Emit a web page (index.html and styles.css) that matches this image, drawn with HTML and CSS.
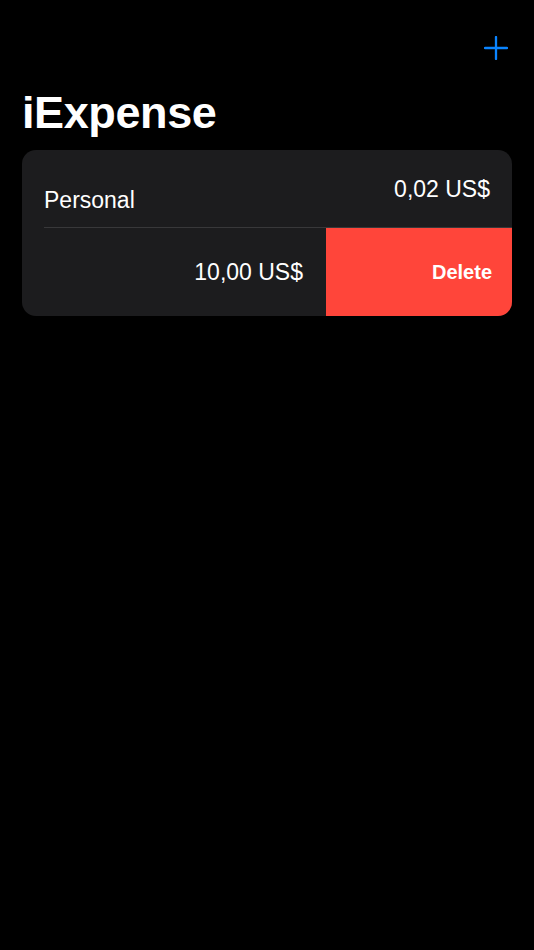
FILE: index.html
```html
<!DOCTYPE html>
<html lang="en">
<head>
    <meta charset="UTF-8">
    <meta name="viewport" content="width=device-width, initial-scale=1.0">
    <title>iExpense</title>
    <link rel="stylesheet" href="styles.css">
</head>
<body>

    <div class="wrapper">
        <header class="nav">
            <a href="" class="add-btn" aria-label="Add">
                <svg width="24" height="24" viewBox="0 0 24 24">
                    <path d="M12 1 V23 M1 12 H23" stroke="#0a84ff" stroke-width="2.3" stroke-linecap="round" fill="none"/>
                </svg>
            </a>
        </header>
        <main>
            <h1 class="title">iExpense</h1>
            <ul class="list">
                <li class="row row-first">
                    <span class="name">Personal</span>
                    <span class="amount">0,02 US$</span>
                </li>
                <li class="row row-swiped">
                    <div class="row-content">
                        <span class="amount">10,00 US$</span>
                    </div>
                    <a href="" class="delete-btn">Delete</a>
                </li>
            </ul>
        </main>
    </div>

</body>
</html>
```

FILE: styles.css
```css
*{box-sizing: border-box;}
ul{list-style: none;margin:0;padding:0;}
a{text-decoration: none;color:inherit;}
body{
    margin:0;
    background:#000;
    color:#fff;
    font-family: "Liberation Sans", Arial, sans-serif;
}

.wrapper{
    min-height:100vh;
}

/* top bar */
.nav{
    display:flex;
    justify-content: flex-end;
    padding: 36px 26px 0 0;
}
.nav>.add-btn{
    display:block;
    width:24px;
    height:24px;
}
.nav>.add-btn>svg{
    display:block;
}

.title{
    margin: 27px 0 11px 0;
    padding-left:22px;
    font-size:45px;
    line-height:52px;
    font-weight:700;
    letter-spacing:-0.4px;
}

/* list card */
.list{
    margin: 0 22px;
    background:#1c1c1e;
    border-radius:14px;
    overflow:hidden;
}
.list>.row{
    font-size:23px;
    line-height:28px;
}
.list>.row-first{
    height:78px;
    display:flex;
    justify-content: space-between;
    align-items: flex-start;
    padding: 25px 22px 0 22px;
    position:relative;
}
.list>.row-first>.name{
    margin-top:11px;
}
.list>.row-first::after{
    content:"";
    position:absolute;
    left:22px;
    right:0;
    bottom:0;
    height:1px;
    background:#38383a;
}

.list>.row-swiped{
    height:88px;
    display:flex;
}
.list>.row-swiped>.row-content{
    flex:1;
    display:flex;
    justify-content: flex-end;
    align-items: center;
    padding-right:23px;
}
.list>.row-swiped>.delete-btn{
    width:186px;
    background:#ff453a;
    display:flex;
    justify-content: flex-end;
    align-items: center;
    padding-right:20px;
    font-size:20px;
    font-weight:700;
}
```
